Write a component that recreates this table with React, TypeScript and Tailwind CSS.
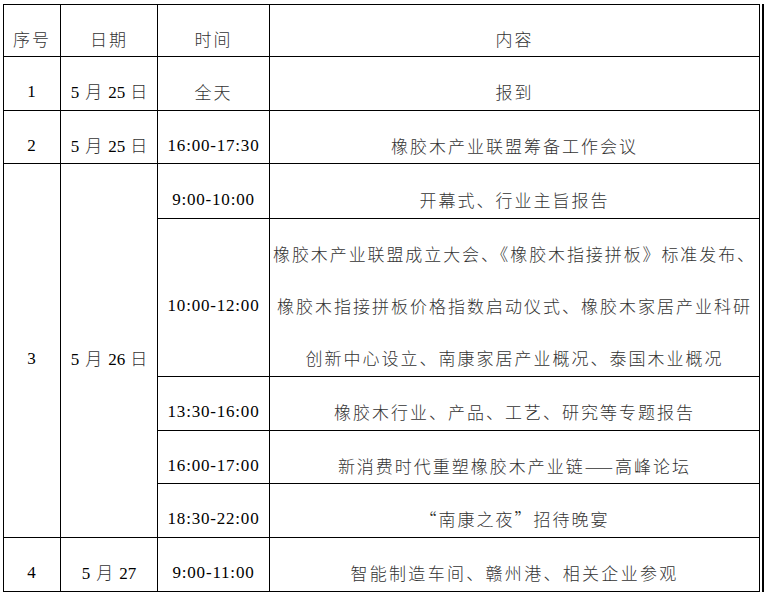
import React from "react";

const cell =
  "flex items-center justify-center border-r border-b border-black pt-[17px] text-black";
const cjk = "font-['Noto_Sans_CJK_SC',sans-serif] font-light text-[17px] tracking-[2px] text-[#333]";
const num = "font-['Liberation_Serif','Noto_Sans_CJK_SC',serif] text-[17px] tracking-[0.8px] text-black";

function C({ children, className = "" }: { children: React.ReactNode; className?: string }) {
  return <div className={`${cell} ${className}`}>{children}</div>;
}

function Date({ d, tail = true }: { d: string; tail?: boolean }) {
  return (
    <span className="font-['Liberation_Serif',serif] text-[17px] text-black">
      5<span className="font-['Noto_Sans_CJK_SC',sans-serif] font-light text-[#333] mx-[6px]">月</span>
      {d}
      {tail && (
        <span className="font-['Noto_Sans_CJK_SC',sans-serif] font-light text-[#333] ml-[5px]">日</span>
      )}
    </span>
  );
}

export default function App() {
  return (
    <div className="w-[764px] h-[593px] bg-white">
      <div className="flex pt-[4px] pl-[3px]">
        <div className="grid grid-cols-[57px_97px_112px_490px] grid-rows-[52px_54px_53px_55px_158px_54px_53px_54px_54px] border-l border-t border-black">
          <C><span className={cjk}>序号</span></C>
          <C><span className={cjk}>日期</span></C>
          <C><span className={cjk}>时间</span></C>
          <C><span className={cjk}>内容</span></C>

          <C><span className={num}>1</span></C>
          <C><Date d="25" /></C>
          <C><span className={cjk}>全天</span></C>
          <C><span className={cjk}>报到</span></C>

          <C><span className={num}>2</span></C>
          <C><Date d="25" /></C>
          <C><span className={num}>16:00-17:30</span></C>
          <C><span className={cjk}>橡胶木产业联盟筹备工作会议</span></C>

          <C className="row-span-5"><span className={num}>3</span></C>
          <C className="row-span-5"><Date d="26" /></C>
          <C><span className={num}>9:00-10:00</span></C>
          <C><span className={cjk}>开幕式、行业主旨报告</span></C>

          <C><span className={num}>10:00-12:00</span></C>
          <C>
            <div className="flex flex-col items-center gap-[28px]">
              <span className={`${cjk} leading-[24px] !tracking-[1.9px]`}>
                橡胶木产业联盟成立大会、《橡胶木指接拼板》标准发布、
              </span>
              <span className={`${cjk} leading-[24px]`}>
                橡胶木指接拼板价格指数启动仪式、橡胶木家居产业科研
              </span>
              <span className={`${cjk} leading-[24px]`}>
                创新中心设立、南康家居产业概况、泰国木业概况
              </span>
            </div>
          </C>

          <C><span className={num}>13:30-16:00</span></C>
          <C><span className={cjk}>橡胶木行业、产品、工艺、研究等专题报告</span></C>

          <C><span className={num}>16:00-17:00</span></C>
          <C><span className={cjk}>新消费时代重塑橡胶木产业链——高峰论坛</span></C>

          <C><span className={num}>18:30-22:00</span></C>
          <C><span className={cjk}>“南康之夜”招待晚宴</span></C>

          <C><span className={num}>4</span></C>
          <C><Date d="27" tail={false} /></C>
          <C><span className={num}>9:00-11:00</span></C>
          <C><span className={`${cjk} !tracking-[2.3px]`}>智能制造车间、赣州港、相关企业参观</span></C>
        </div>
        <div className="ml-[2px] w-[2px] h-[588px] bg-black" />
      </div>
    </div>
  );
}
